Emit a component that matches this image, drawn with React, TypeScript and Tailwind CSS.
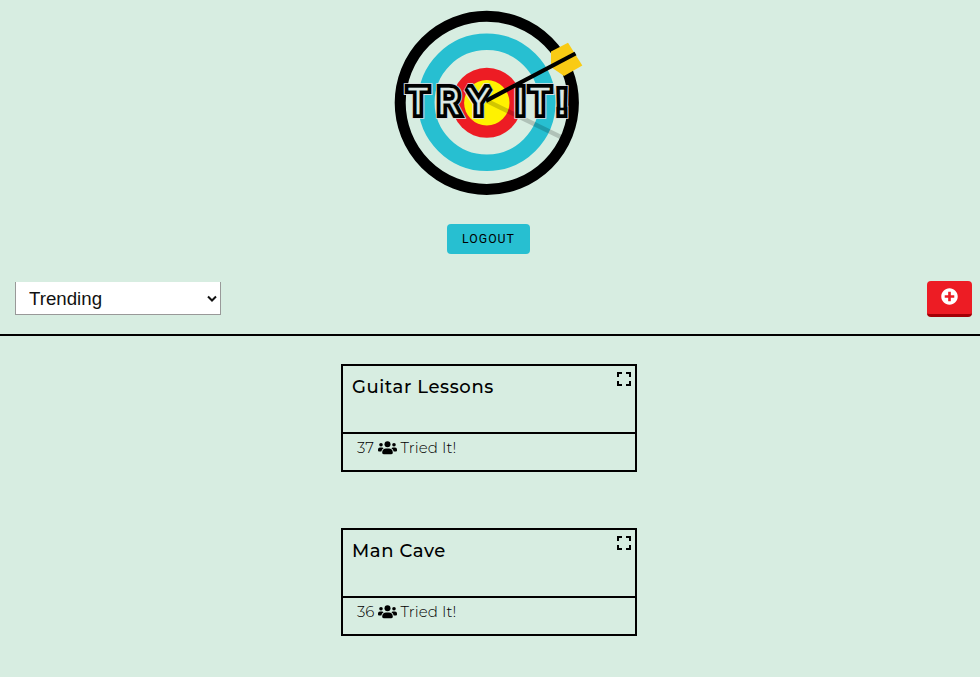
import { FaPlusCircle } from "react-icons/fa";

const glyphs = [
  { c: "T", x: 418 },
  { c: "R", x: 448.5 },
  { c: "Y", x: 478.5 },
  { c: "I", x: 520.5 },
  { c: "T", x: 540 },
];

function Word({ stroke, width, fill }: { stroke: string; width: number; fill: string }) {
  return (
    <g
      fontFamily="Inter, sans-serif"
      fontSize="35.5"
      fontWeight="300"
      textAnchor="middle"
      stroke={stroke}
      strokeWidth={width}
      fill={fill}
      strokeMiterlimit="2"
    >
      {glyphs.map((g, i) => (
        <text key={i} x={g.x} y="114">
          {g.c}
        </text>
      ))}
      <text x="562" y="114" fontFamily="Liberation Sans, sans-serif">
        !
      </text>
    </g>
  );
}

function Logo() {
  return (
    <svg width="196" height="196" viewBox="389 4 196 196" className="block">
      <g fill="none">
        <circle cx="486.8" cy="102.8" r="86.6" stroke="#000" strokeWidth="11" />
        <circle cx="486.8" cy="102.3" r="60.5" stroke="#27bfd1" strokeWidth="16.6" />
      </g>
      <circle cx="486.8" cy="102.8" r="35" fill="#ed1c24" />
      <circle cx="486.8" cy="102.8" r="22.7" fill="#fff200" />
      <path d="M487 101L567 140" stroke="#000" strokeOpacity="0.18" strokeWidth="4.5" />
      <path d="M551 51.5L568 42.7L582.3 65.5L564 76L551 67Z" fill="#f9cb14" />
      <Word stroke="#dadde0" width={9.6} fill="#dadde0" />
      <Word stroke="#000" width={7.8} fill="#000" />
      <Word stroke="#dde8e4" width={0.3} fill="#dde8e4" />
      <path d="M486 100.8L575.5 53.5" stroke="#000" strokeWidth="4.2" />
    </svg>
  );
}

function ExpandIcon() {
  return (
    <svg width="14" height="14" viewBox="0 0 14 14" fill="none" stroke="#000" strokeWidth="2">
      <path d="M1 5V1H5M9 1H13V5M13 9V13H9M5 13H1V9" />
    </svg>
  );
}

function PeopleIcon() {
  return (
    <svg width="19" height="14" viewBox="0 0 19 14" fill="#000">
      <circle cx="9.5" cy="3.2" r="3" />
      <circle cx="3" cy="3.8" r="1.8" />
      <circle cx="16" cy="3.8" r="1.8" />
      <path d="M4.2 11.6C4.2 9 6 7.6 8 7.6H11C13 7.6 14.8 9 14.8 11.6C14.8 12.7 14.3 13.3 13.3 13.3H5.7C4.7 13.3 4.2 12.7 4.2 11.6Z" />
      <path d="M2 6.6H4Q5 6.6 5.6 7.2Q3.8 8.3 3.3 10.4H1Q0 10.4 0 9.4V8.6Q0 6.6 2 6.6Z" />
      <path d="M17 6.6H15Q14 6.6 13.4 7.2Q15.2 8.3 15.7 10.4H18Q19 10.4 19 9.4V8.6Q19 6.6 17 6.6Z" />
    </svg>
  );
}

function Card({ title, count }: { title: string; count: number }) {
  return (
    <article className="h-[108px] w-[295.5px] border-2 border-black font-[Montserrat,sans-serif]">
      <div className="flex h-[68px] justify-between border-b-2 border-black pl-[9px] pr-[4px] pt-[7px]">
        <h2 className="text-[18px] font-medium leading-7 tracking-[0.6px]">{title}</h2>
        <button aria-label="Expand" className="-mt-px h-[14px]">
          <ExpandIcon />
        </button>
      </div>
      <p className="flex items-center pl-[14px] pt-[2px] text-[15px] font-light leading-6">
        <span className="w-[21px]">{count}</span>
        <PeopleIcon />
        <span className="ml-[3.5px] tracking-[0.1px]">Tried It!</span>
      </p>
    </article>
  );
}

export default function App() {
  return (
    <main className="flex h-[677px] w-full flex-col overflow-hidden bg-[#d7ede1] text-black">
      <header className="flex flex-col items-center pr-[6px] pt-1">
        <Logo />
        <button className="ml-[3px] mt-6 h-[30px] w-[83px] rounded-[4px] bg-[#27bfd1] font-[Roboto,sans-serif] text-[12.3px] tracking-[1px]">
          LOGOUT
        </button>
      </header>
      <div className="mt-[27px] flex h-[55px] items-start justify-between border-b-2 border-black pl-[15px] pr-2">
        <div className="relative mt-px">
          <select className="block h-[33px] w-[206px] appearance-none border border-t-0 border-[#999] bg-white pl-[13px] pt-[3px] font-[Liberation_Sans,sans-serif] text-[18.7px] text-[#111]">
            <option>Trending</option>
          </select>
          <svg className="pointer-events-none absolute right-1 top-[13px]" width="10" height="8" viewBox="0 0 10 8" fill="none" stroke="#111" strokeWidth="2">
            <path d="M1 1.5L5 5.5L9 1.5" />
          </svg>
        </div>
        <button aria-label="Add" className="flex h-[36px] w-[45px] justify-center rounded-[4px] border-b-[3px] border-[#a30006] bg-[#ed1c24] pt-[7px] text-white">
          <FaPlusCircle className="size-[17px]" />
        </button>
      </div>
      <section className="flex flex-col items-start gap-14 pl-[341px] pt-7">
        <Card title="Guitar Lessons" count={37} />
        <Card title="Man Cave" count={36} />
      </section>
    </main>
  );
}
